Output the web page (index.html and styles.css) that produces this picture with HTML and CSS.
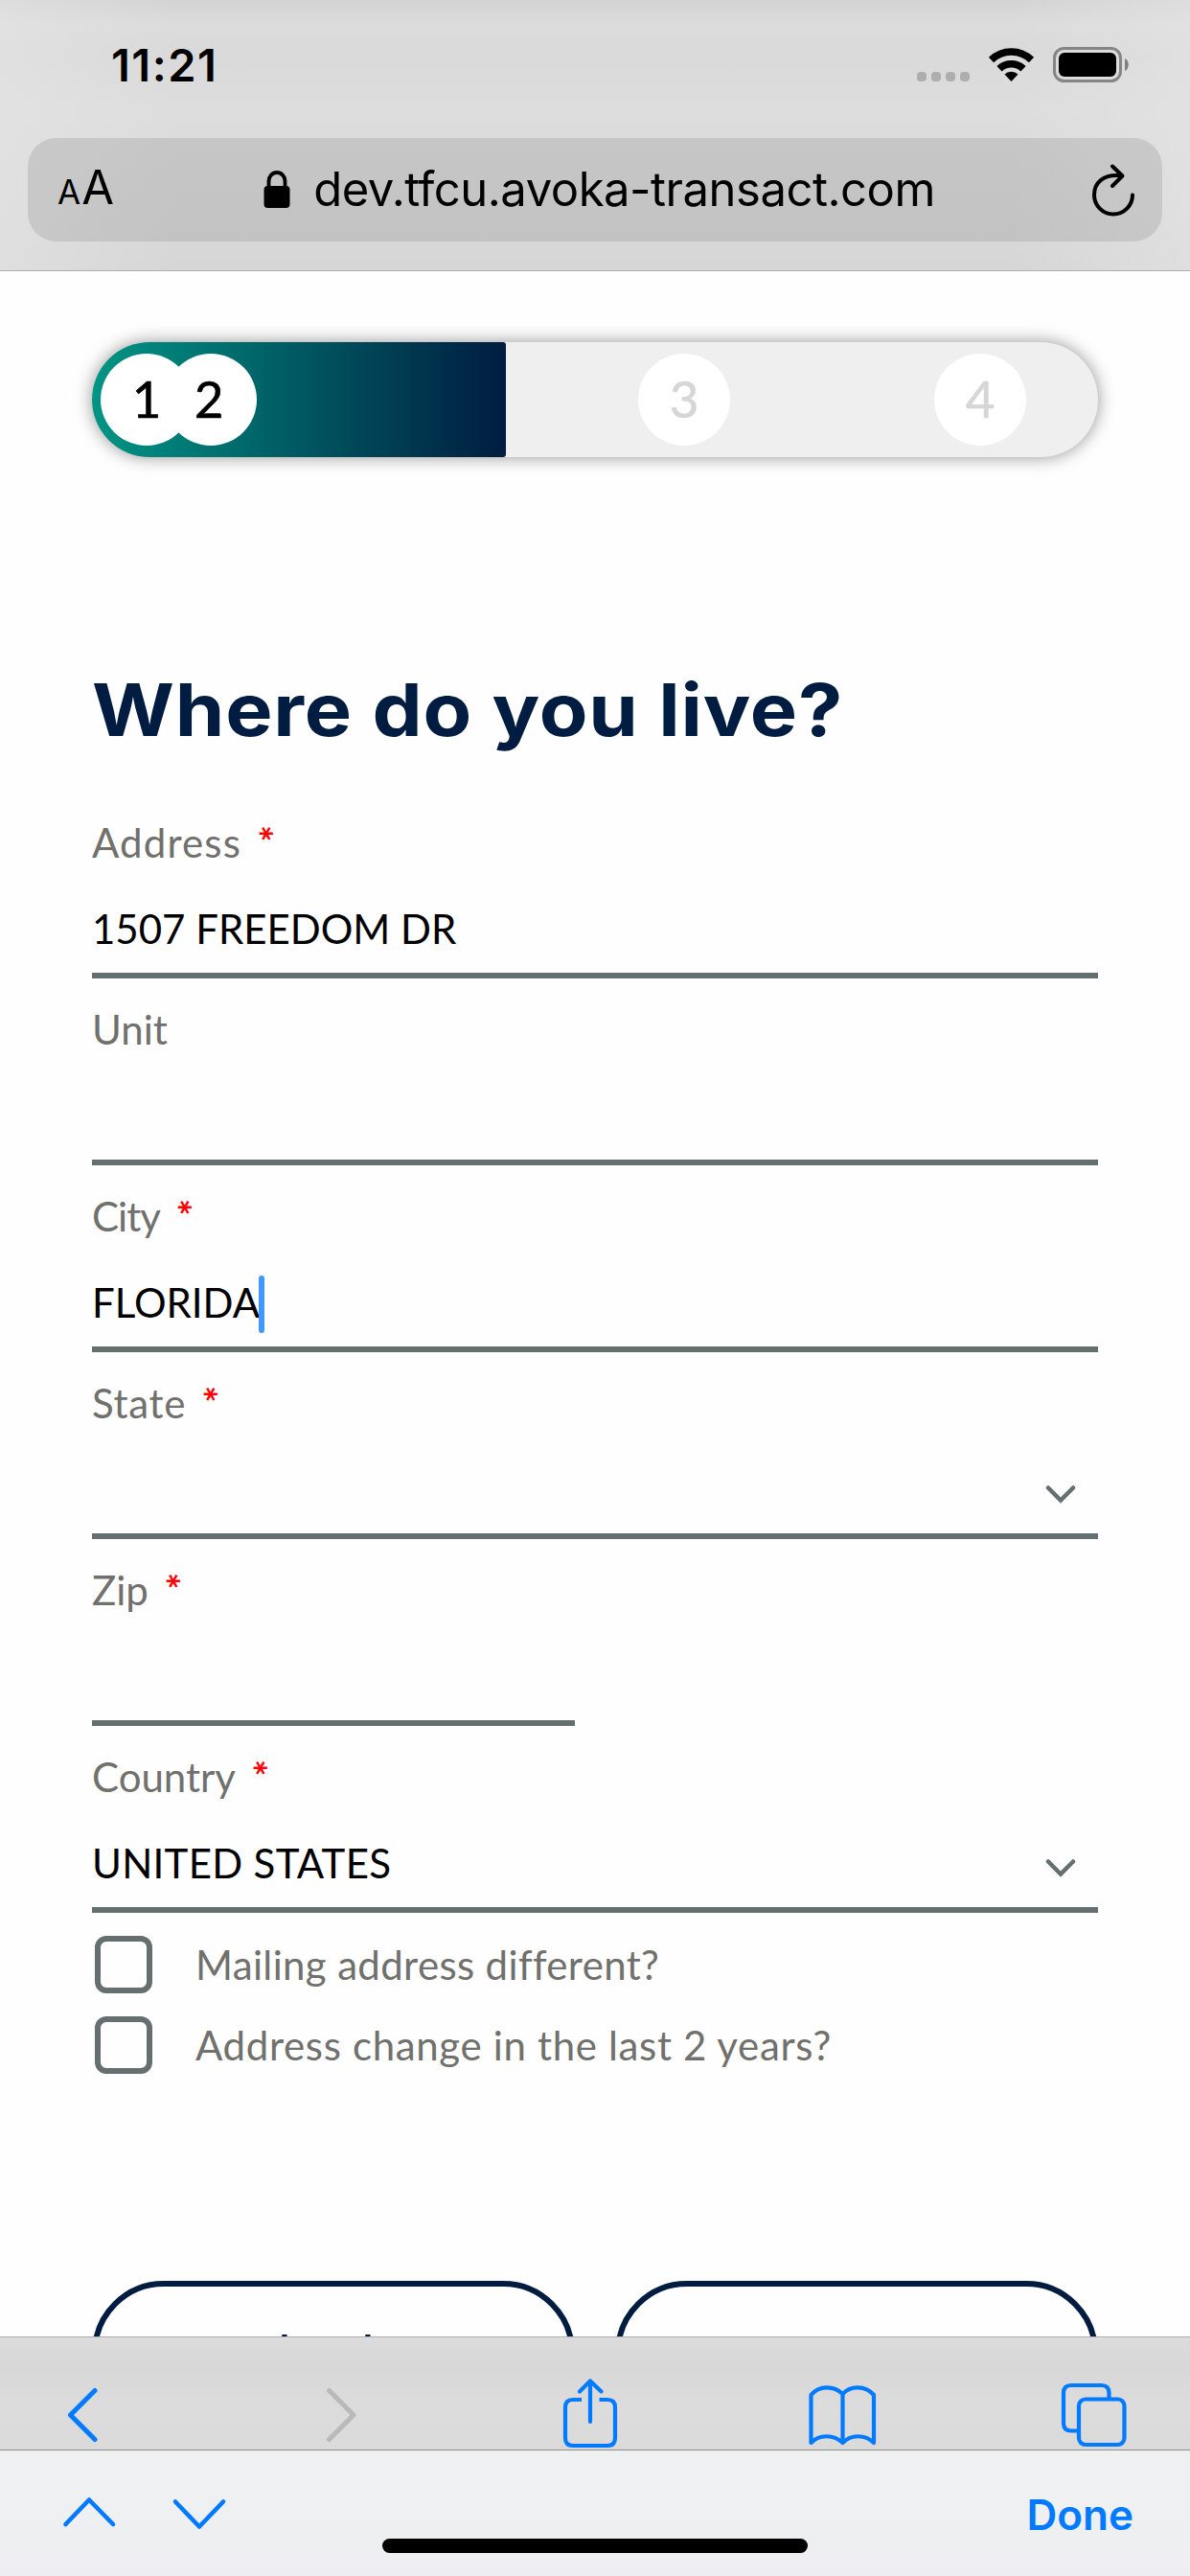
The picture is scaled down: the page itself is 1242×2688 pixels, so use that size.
FILE: index.html
```html
<!DOCTYPE html>
<html lang="en">
<head>
<meta charset="utf-8">
<title>Where do you live?</title>
<link rel="stylesheet" href="styles.css">
</head>
<body>
<div class="screen">
  <header class="chrome">
    <div class="status">
      <span class="time">11:21</span>
      <svg class="indicators" width="222" height="38" viewBox="957 49 222 38">
        <g fill="#aeaeae">
          <rect x="957" y="75" width="10" height="10" rx="4"/>
          <rect x="972" y="75" width="10" height="10" rx="4"/>
          <rect x="987" y="75" width="10" height="10" rx="4"/>
          <rect x="1002" y="75" width="10" height="10" rx="4"/>
        </g>
        <g fill="none" stroke="#000" stroke-width="7.5">
          <path d="M1034.500 62.500A30 30 0 0 1 1076.500 62.500"/>
          <path d="M1043 71.800A18.200 18.200 0 0 1 1068 71.800"/>
        </g>
        <path d="M1055.500 85L1048.500 77.500A10 10 0 0 1 1062.500 77.500Z"/>
        <rect x="1100.500" y="50.500" width="69" height="34" rx="10" fill="none" stroke="#858585" stroke-width="3"/>
        <rect x="1105" y="55" width="60" height="25" rx="6"/>
        <path d="M1174 61c5 2 5 11 0 13z" fill="#7f7f7f"/>
      </svg>
    </div>
    <div class="address-bar">
      <span class="reader"><span class="reader-small">A</span><span class="reader-large">A</span></span>
      <span class="site">
        <svg width="28" height="40" viewBox="0 0 28 40">
          <rect x="0.500" y="16" width="27" height="23" rx="4"/>
          <path d="M5.500 18v-7a8.500 9 0 0 1 17 0v7" fill="none" stroke="#000" stroke-width="3.800"/>
        </svg>
        <span class="url">dev.tfcu.avoka-transact.com</span>
      </span>
      <svg class="reload" width="46" height="56" viewBox="1139 170 46 56" fill="none" stroke="#000" stroke-width="4" stroke-linecap="round" stroke-linejoin="round">
        <path d="M1171 183.300C1151 181 1142 191 1142 203.500A20 20 0 0 0 1182 203.500"/>
        <path d="M1161 173.500L1171.500 183.500L1161 194"/>
      </svg>
    </div>
  </header>

  <main class="page">
    <div class="progress">
      <div class="progress-done">
        <span class="step step-first">1</span>
        <span class="step step-second">2</span>
      </div>
      <div class="progress-left">
        <span class="step">3</span>
        <span class="step">4</span>
      </div>
    </div>

    <h1 class="title">Where do you live?</h1>

    <div class="field">
      <div class="label"><span class="loose">Address</span><span class="required">*</span></div>
      <div class="value">1507 FREEDOM DR</div>
    </div>
    <div class="field">
      <div class="label">Unit</div>
      <div class="value"></div>
    </div>
    <div class="field">
      <div class="label"><span class="tight">City</span><span class="required">*</span></div>
      <div class="value">FLORIDA<span class="caret"></span></div>
    </div>
    <div class="field">
      <div class="label"><span class="wide">State</span><span class="required">*</span></div>
      <div class="value select">
        <svg class="chevron" width="32" height="22" viewBox="0 0 32 22"><path d="M3 3.500L16 16.500L29 3.500"/></svg>
      </div>
    </div>
    <div class="field field-short">
      <div class="label">Zip<span class="required">*</span></div>
      <div class="value"></div>
    </div>
    <div class="field">
      <div class="label">Country<span class="required">*</span></div>
      <div class="value select"><span class="country">UNITED STATES</span>
        <svg class="chevron" width="32" height="22" viewBox="0 0 32 22"><path d="M3 3.500L16 16.500L29 3.500"/></svg>
      </div>
    </div>

    <div class="checks">
      <div class="check"><span class="box"></span><span class="check-mailing">Mailing address different?</span></div>
      <div class="check"><span class="box"></span><span class="check-change">Address change in the last 2 years?</span></div>
    </div>

    <div class="actions">
      <div class="button">back</div>
      <div class="button"></div>
    </div>
  </main>

  <nav class="toolbar">
    <svg width="1242" height="117" viewBox="0 2439 1242 117" fill="none" stroke="#007aff" stroke-width="4.200" stroke-linecap="round" stroke-linejoin="round">
      <path stroke-width="5" d="M99 2494.500L73.500 2520L99 2545.500"/>
      <path stroke-width="5" stroke="#b9b9b9" d="M343.500 2494.500L369 2520L343.500 2545.500"/>
      <path stroke-linecap="butt" d="M607 2504H598Q590 2504 590 2512V2544Q590 2552 598 2552H634Q642 2552 642 2544V2512Q642 2504 634 2504H625.500"/>
      <path d="M616 2484.500V2527M605 2495.500L616 2484.500L627.500 2495.500"/>
      <path d="M879.500 2498C870 2489 855 2489 846.500 2499V2549C855 2540 870 2540 879.500 2549C888 2540 903 2540 912 2549V2499C903 2489 888 2489 879.500 2498ZV2549"/>
      <path stroke-linecap="butt" d="M1124 2536.500H1118Q1110 2536.500 1110 2528.500V2497Q1110 2489 1118 2489H1149.500Q1157.500 2489 1157.500 2497V2503"/>
      <rect x="1126" y="2503.500" width="47.500" height="47.500" rx="7"/>
    </svg>
  </nav>

  <footer class="accessory">
    <div class="accessory-row">
      <svg width="172" height="36" viewBox="65 2605 172 36" fill="none" stroke="#007aff" stroke-width="4.600" stroke-linecap="round" stroke-linejoin="round">
        <path d="M68.500 2634L93 2608.500L118 2634M183 2610.500L208 2636.500L233 2610.500"/>
      </svg>
      <span class="done">Done</span>
    </div>
    <div class="home-indicator"></div>
  </footer>
</div>
</body>
</html>
```
FILE: styles.css
```css
* { box-sizing: border-box; }

body {
  margin: 0;
  background: #fefefe;
  color: #000;
  font-family: Lato, "Open Sans", sans-serif;
}

svg { display: block; flex: none; }

.screen {
  display: flex;
  flex-direction: column;
  width: 1242px;
  height: 2688px;
  overflow: hidden;
}

/* Browser header */
.chrome {
  flex: none;
  height: 283px;
  border-bottom: 1px solid #aeaeae;
  background:
    linear-gradient(90deg, rgba(228, 228, 228, .6), rgba(228, 228, 228, 0) 15%, rgba(228, 228, 228, 0) 85%, rgba(228, 228, 228, .6)),
    linear-gradient(#d3d3d3, #dcdcdc 9%, #d9d9d9 20%, #dddddd 40%, #d6d6d6);
  font-family: Inter, sans-serif;
}

.status {
  display: flex;
  justify-content: space-between;
  align-items: flex-start;
  height: 144px;
  padding: 44px 63px 0 116px;
}

.time {
  font-size: 47px;
  font-weight: 600;
  line-height: 48px;
  letter-spacing: 1.5px;
}

.indicators { margin-top: 5px; }

.address-bar {
  display: flex;
  justify-content: space-between;
  align-items: center;
  height: 108px;
  margin: 0 29px;
  padding: 0 28px 0 31px;
  border-radius: 30px;
  background: rgba(120, 120, 120, .21);
}

.reader {
  display: flex;
  align-items: baseline;
  gap: 1px;
  width: 60px;
  line-height: 108px;
}

.reader-small { font-size: 35px; }
.reader-large { font-size: 49px; }

.site {
  display: flex;
  align-items: center;
  gap: 24px;
  margin-right: 8px;
}

.url {
  font-size: 49px;
  line-height: 110px;
  letter-spacing: -.5px;
  white-space: nowrap;
}

/* Page content */
.page {
  flex: 1;
  min-height: 0;
  overflow: hidden;
  padding: 74px 96px 0;
}

.progress {
  display: flex;
  height: 120px;
  border-radius: 60px;
  background: #efefef;
  box-shadow: 0 0 18px rgba(0, 0, 0, .42);
}

.progress-done {
  display: flex;
  align-items: center;
  width: 432px;
  padding-left: 9px;
  border-radius: 60px 3px 3px 60px;
  background: linear-gradient(90deg, #009584, #001c40);
}

.progress-left {
  flex: 1;
  display: flex;
  align-items: center;
  justify-content: space-between;
  padding: 0 75px 0 138px;
  color: #d6d6d6;
}

.step {
  width: 96px;
  height: 96px;
  border-radius: 50%;
  background: #fff;
  font-size: 53px;
  line-height: 93px;
  text-align: center;
  -webkit-text-stroke: .6px currentColor;
}

.step-second {
  margin-left: -29px;
  padding-right: 4px;
}

.title {
  margin: 219px 0 0;
  color: #001c40;
  font: 700 76px/88px Inter, sans-serif;
  letter-spacing: .75px;
  white-space: nowrap;
  transform: scaleX(1.09);
  transform-origin: left;
  height: 130px;
}

.field {
  height: 195px;
  padding-top: 23px;
  border-bottom: 6px solid #656f70;
  font-size: 42px;
  line-height: 60px;
}

.field-short { width: 504px; }

.label {
  display: flex;
  height: 60px;
  color: #70706c;
}

/* Turned so that one stroke of the star lies flat */
.required {
  height: 60px;
  margin-left: 15px;
  color: #f00;
  font-weight: 700;
  line-height: 58px;
  transform: rotate(30deg);
  transform-origin: 50% 24px;
}

.loose { letter-spacing: 1.15px; }
.wide { letter-spacing: .7px; }
.tight { letter-spacing: -1px; }

.value {
  display: flex;
  height: 60px;
  margin-top: 30px;
}

.caret {
  width: 6px;
  height: 60px;
  margin: 2px 0 0 -1px;
  border-radius: 3px;
  background: #4298ff;
}

.select {
  justify-content: flex-end;
  padding-right: 23px;
}

.country {
  margin-right: auto;
  letter-spacing: .3px;
}

.chevron {
  margin-top: 25px;
  fill: none;
  stroke: #656f70;
  stroke-width: 4.500;
  stroke-linecap: round;
}

.checks {
  padding: 24px 0 0 3px;
}

.check {
  display: flex;
  align-items: center;
  height: 60px;
  margin-bottom: 24px;
  color: #70706c;
  font-size: 42px;
  line-height: 58px;
}

.box {
  width: 60px;
  height: 60px;
  margin-right: 45px;
  border: 6px solid #656f70;
  border-radius: 12px;
}

.check-mailing { letter-spacing: .35px; }
.check-change { letter-spacing: .65px; }

.actions {
  display: grid;
  grid-template-columns: 1fr 1fr;
  gap: 42px;
  margin-top: 216px;
}

.button {
  height: 150px;
  border: 6px solid #001c40;
  border-radius: 75px;
  color: #001c40;
  font: 500 49px/138px Inter, sans-serif;
  text-align: center;
}

/* Browser toolbar */
.toolbar {
  flex: none;
  height: 118px;
  border-top: 1px solid #aeaeae;
  background: linear-gradient(#dcdcdc, #d7d7d7 25%, #dcdcdc 60%, #dadada);
}

/* Keyboard accessory bar */
.accessory {
  flex: none;
  height: 132px;
  padding: 0 59px 0 65px;
  border-top: 1px solid #8d8d8f;
  background: linear-gradient(#eff1f1, #eeeef2);
}

.accessory-row {
  display: flex;
  justify-content: space-between;
  height: 92px;
  padding-top: 48px;
}

.done {
  color: #007aff;
  font: 600 44px/50px Inter, sans-serif;
  margin-top: -6px;
}

.home-indicator {
  width: 444px;
  height: 15px;
  margin-left: 334px;
  border-radius: 8px;
  background: #000;
}
```
